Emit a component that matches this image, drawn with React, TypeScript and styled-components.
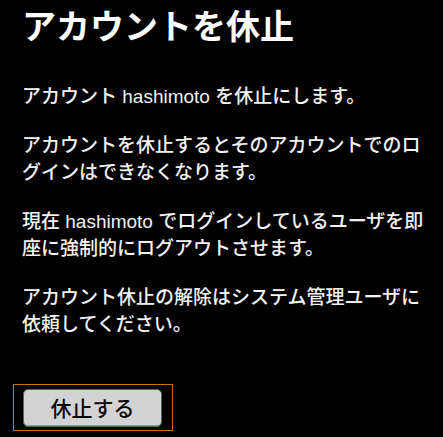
import styled, { createGlobalStyle } from 'styled-components'

const GlobalStyle = createGlobalStyle`
  html, body {
    margin: 0;
    padding: 0;
    background: #000;
  }
  body {
    font-family: "Liberation Sans", "Noto Sans CJK JP", sans-serif;
  }
`

function App() {
  return (
    <>
      <GlobalStyle />
      <Page>
        <Title>アカウントを休止</Title>
        <Text>アカウント hashimoto を休止にします。</Text>
        <Text>アカウントを休止するとそのアカウントでのログインはできなくなります。</Text>
        <Text>現在 hashimoto でログインしているユーザを即座に強制的にログアウトさせます。</Text>
        <Text>アカウント休止の解除はシステム管理ユーザに依頼してください。</Text>
        <Actions>
          <FocusRing>
            <SubmitButton type="button">休止する</SubmitButton>
          </FocusRing>
        </Actions>
      </Page>
    </>
  )
}

const Page = styled.main`
  box-sizing: border-box;
  width: 443px;
  min-height: 437px;
  padding: 7px 8px 0 22px;
  border-left: 1px solid #1e1e1e;
  margin-left: -1px;
  background: #000;
  color: #f2f2f2;
`
const Title = styled.h1`
  margin: 0 0 36px 0;
  font-size: 34px;
  line-height: 40px;
  font-weight: 700;
  color: #fff;
`
const Text = styled.p`
  margin: 22px 0;
  font-size: 19px;
  line-height: 27px;
  font-weight: 500;
`
const Actions = styled.div`
  display: flex;
  margin: 46px 0 0 -9px;
`
const FocusRing = styled.div`
  display: flex;
  padding: 4px 10px 3px 9px;
  border: 1px solid #c8720c;
`
const SubmitButton = styled.button`
  width: 139px;
  height: 38px;
  padding: 0;
  border: 1px solid #5e5e5e;
  border-radius: 5px;
  background: #d3d3d3;
  color: #0a0a0a;
  font-family: "Liberation Sans", "Noto Sans CJK JP", sans-serif;
  font-size: 21px;
  font-weight: 500;
  line-height: 1;
  box-shadow: inset 0 -1px 0 #9a9a9a;
`

export default App
